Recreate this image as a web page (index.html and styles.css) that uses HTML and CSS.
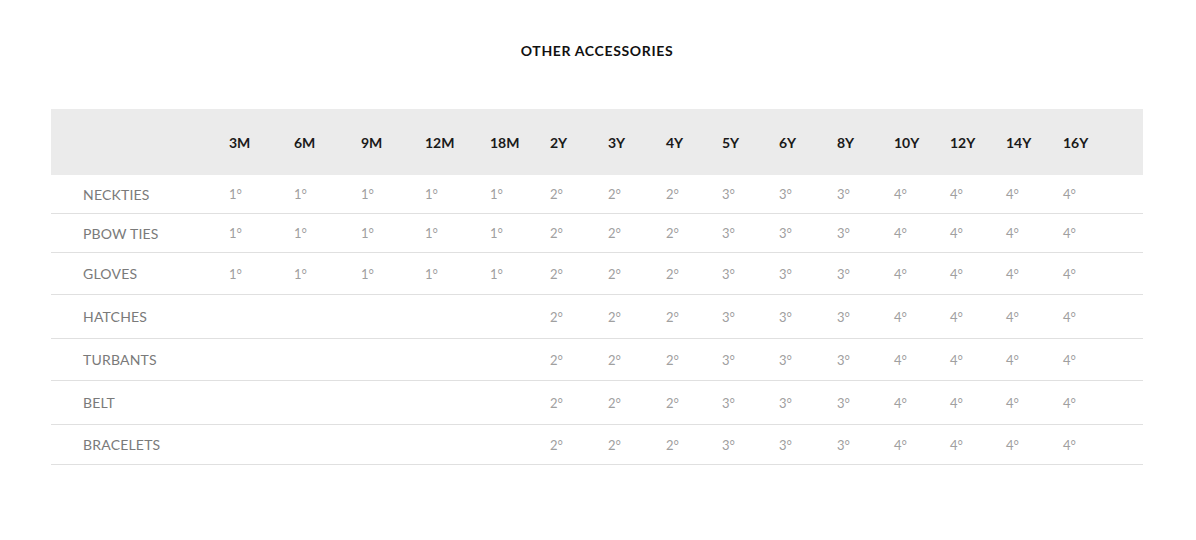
FILE: index.html
```html
<!DOCTYPE html>
<html>
<head>
<meta charset="utf-8">
<link rel="stylesheet" href="styles.css">
</head>
<body>
<div class="page">
  <h2 class="title">OTHER ACCESSORIES</h2>
  <div class="table">
    <div class="row head">
      <div class="cell label"></div>
      <div class="cell">3M</div><div class="cell">6M</div><div class="cell">9M</div><div class="cell">12M</div><div class="cell">18M</div>
      <div class="cell">2Y</div><div class="cell">3Y</div><div class="cell">4Y</div><div class="cell">5Y</div><div class="cell">6Y</div>
      <div class="cell">8Y</div><div class="cell">10Y</div><div class="cell">12Y</div><div class="cell">14Y</div><div class="cell">16Y</div>
    </div>
    <div class="row r1">
      <div class="cell label">NECKTIES</div>
      <div class="cell">1°</div><div class="cell">1°</div><div class="cell">1°</div><div class="cell">1°</div><div class="cell">1°</div>
      <div class="cell">2°</div><div class="cell">2°</div><div class="cell">2°</div><div class="cell">3°</div><div class="cell">3°</div>
      <div class="cell">3°</div><div class="cell">4°</div><div class="cell">4°</div><div class="cell">4°</div><div class="cell">4°</div>
    </div>
    <div class="row r2">
      <div class="cell label">PBOW TIES</div>
      <div class="cell">1°</div><div class="cell">1°</div><div class="cell">1°</div><div class="cell">1°</div><div class="cell">1°</div>
      <div class="cell">2°</div><div class="cell">2°</div><div class="cell">2°</div><div class="cell">3°</div><div class="cell">3°</div>
      <div class="cell">3°</div><div class="cell">4°</div><div class="cell">4°</div><div class="cell">4°</div><div class="cell">4°</div>
    </div>
    <div class="row r3">
      <div class="cell label">GLOVES</div>
      <div class="cell">1°</div><div class="cell">1°</div><div class="cell">1°</div><div class="cell">1°</div><div class="cell">1°</div>
      <div class="cell">2°</div><div class="cell">2°</div><div class="cell">2°</div><div class="cell">3°</div><div class="cell">3°</div>
      <div class="cell">3°</div><div class="cell">4°</div><div class="cell">4°</div><div class="cell">4°</div><div class="cell">4°</div>
    </div>
    <div class="row r4">
      <div class="cell label">HATCHES</div>
      <div class="cell"></div><div class="cell"></div><div class="cell"></div><div class="cell"></div><div class="cell"></div>
      <div class="cell">2°</div><div class="cell">2°</div><div class="cell">2°</div><div class="cell">3°</div><div class="cell">3°</div>
      <div class="cell">3°</div><div class="cell">4°</div><div class="cell">4°</div><div class="cell">4°</div><div class="cell">4°</div>
    </div>
    <div class="row r5">
      <div class="cell label">TURBANTS</div>
      <div class="cell"></div><div class="cell"></div><div class="cell"></div><div class="cell"></div><div class="cell"></div>
      <div class="cell">2°</div><div class="cell">2°</div><div class="cell">2°</div><div class="cell">3°</div><div class="cell">3°</div>
      <div class="cell">3°</div><div class="cell">4°</div><div class="cell">4°</div><div class="cell">4°</div><div class="cell">4°</div>
    </div>
    <div class="row r6">
      <div class="cell label">BELT</div>
      <div class="cell"></div><div class="cell"></div><div class="cell"></div><div class="cell"></div><div class="cell"></div>
      <div class="cell">2°</div><div class="cell">2°</div><div class="cell">2°</div><div class="cell">3°</div><div class="cell">3°</div>
      <div class="cell">3°</div><div class="cell">4°</div><div class="cell">4°</div><div class="cell">4°</div><div class="cell">4°</div>
    </div>
    <div class="row r7">
      <div class="cell label">BRACELETS</div>
      <div class="cell"></div><div class="cell"></div><div class="cell"></div><div class="cell"></div><div class="cell"></div>
      <div class="cell">2°</div><div class="cell">2°</div><div class="cell">2°</div><div class="cell">3°</div><div class="cell">3°</div>
      <div class="cell">3°</div><div class="cell">4°</div><div class="cell">4°</div><div class="cell">4°</div><div class="cell">4°</div>
    </div>
  </div>
</div>
</body>
</html>
```
FILE: styles.css
```css
* { box-sizing: border-box; }
html, body { margin: 0; padding: 0; background: #fff; }
body { font-family: Lato, "Liberation Sans", sans-serif; }
.page { padding: 42px 53px 0 51px; }
.title {
  margin: 0 0 49px 0;
  text-align: center;
  font-size: 14px;
  font-weight: 700;
  color: #111;
  line-height: 18px;
  letter-spacing: 0.65px;
}
.table { width: 1092px; }
.row {
  display: grid;
  grid-template-columns: 178px 65px 67px 64px 65px 60px 58px 58px 56px 57px 58px 57px 56px 56px 57px 80px;
  align-items: center;
  border-bottom: 1px solid #e0e0e0;
}
.head {
  background: #ebebeb;
  height: 66px;
  border-bottom: none;
  font-weight: 700;
  font-size: 14px;
  color: #1a1a1a;
}
.cell { white-space: nowrap; }
.row:not(.head) { font-size: 13px; color: #a0a0a0; }
.row:not(.head) .label { font-size: 14px; color: #7a7a7a; letter-spacing: 0.2px; }
.label { padding-left: 32px; }
.r1 { height: 39px; }
.r2 { height: 39px; }
.r3 { height: 42px; }
.r4 { height: 44px; }
.r5 { height: 42px; }
.r6 { height: 44px; }
.r7 { height: 40px; }
```
